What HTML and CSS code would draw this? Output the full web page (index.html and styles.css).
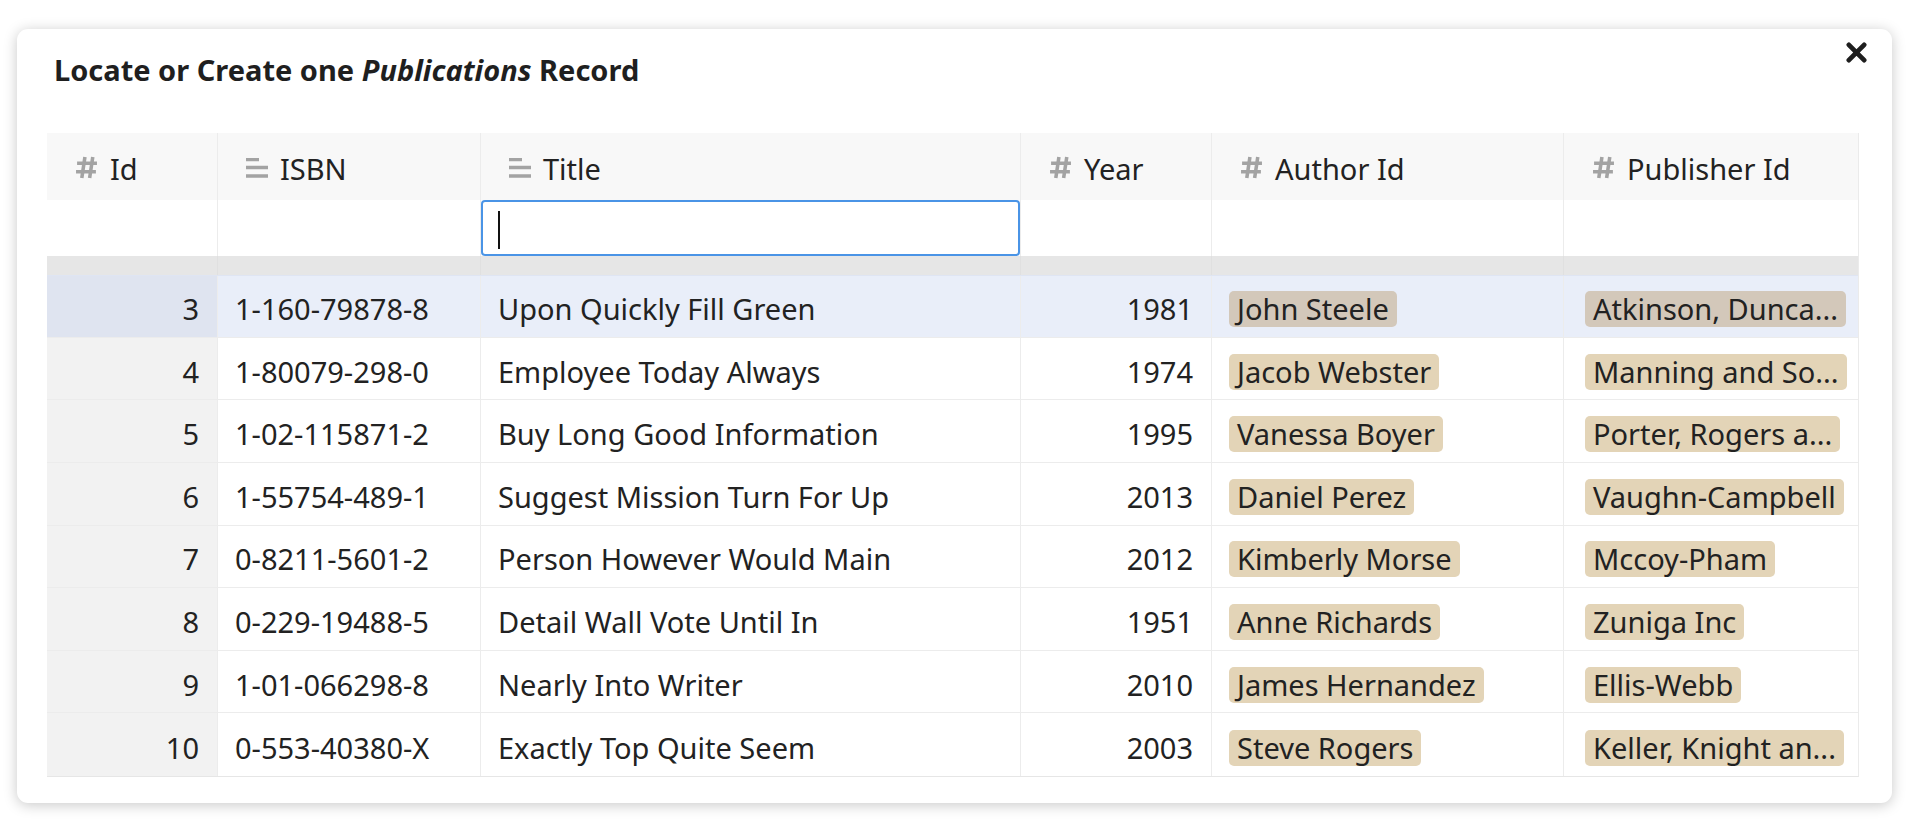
FILE: index.html
```html
<!DOCTYPE html>
<html lang="en">
<head>
<meta charset="utf-8">
<title>Locate or Create one Publications Record</title>
<link rel="stylesheet" href="styles.css">
</head>
<body>
<div class="modal">
  <button class="close" aria-label="Close">
    <svg width="22" height="22" viewBox="0 0 22 22"><path d="M3 3 L19 19 M19 3 L3 19" stroke="#1e1e1e" stroke-width="5" stroke-linecap="round"/></svg>
  </button>
  <h1 class="title">Locate or Create one <em>Publications</em> Record</h1>
  <div class="grid">
    <div class="row head">
      <div class="cell"><svg class="ico hash" viewBox="0 0 22 22"><path d="M9.5 1 L6.5 21 M17 1 L14 21 M2 7 H21 M1 15 H20" stroke="#a3a3a3" stroke-width="3.4"/></svg><span>Id</span></div>
      <div class="cell"><svg class="ico" viewBox="0 0 22 20"><path d="M0 1.5 H13 M0 9.5 H22 M0 18 H22" stroke="#a3a3a3" stroke-width="3.3"/></svg><span>ISBN</span></div>
      <div class="cell"><svg class="ico" viewBox="0 0 22 20"><path d="M0 1.5 H13 M0 9.5 H22 M0 18 H22" stroke="#a3a3a3" stroke-width="3.3"/></svg><span>Title</span></div>
      <div class="cell"><svg class="ico hash" viewBox="0 0 22 22"><path d="M9.5 1 L6.5 21 M17 1 L14 21 M2 7 H21 M1 15 H20" stroke="#a3a3a3" stroke-width="3.4"/></svg><span>Year</span></div>
      <div class="cell"><svg class="ico hash" viewBox="0 0 22 22"><path d="M9.5 1 L6.5 21 M17 1 L14 21 M2 7 H21 M1 15 H20" stroke="#a3a3a3" stroke-width="3.4"/></svg><span>Author Id</span></div>
      <div class="cell"><svg class="ico hash" viewBox="0 0 22 22"><path d="M9.5 1 L6.5 21 M17 1 L14 21 M2 7 H21 M1 15 H20" stroke="#a3a3a3" stroke-width="3.4"/></svg><span>Publisher Id</span></div>
    </div>
    <div class="row filter">
      <div class="cell"></div>
      <div class="cell"></div>
      <div class="cell input-cell"><div class="fake-input"><span class="caret"></span></div></div>
      <div class="cell"></div>
      <div class="cell"></div>
      <div class="cell"></div>
    </div>
    <div class="row band">
      <div class="cell"></div><div class="cell"></div><div class="cell"></div><div class="cell"></div><div class="cell"></div><div class="cell"></div>
    </div>
    <div class="row data selected">
      <div class="cell num id">3</div><div class="cell">1-160-79878-8</div><div class="cell">Upon Quickly Fill Green</div><div class="cell num">1981</div>
      <div class="cell"><span class="tag">John Steele</span></div><div class="cell"><span class="tag">Atkinson, Dunca...</span></div>
    </div>
    <div class="row data">
      <div class="cell num id">4</div><div class="cell">1-80079-298-0</div><div class="cell">Employee Today Always</div><div class="cell num">1974</div>
      <div class="cell"><span class="tag">Jacob Webster</span></div><div class="cell"><span class="tag">Manning and So...</span></div>
    </div>
    <div class="row data">
      <div class="cell num id">5</div><div class="cell">1-02-115871-2</div><div class="cell">Buy Long Good Information</div><div class="cell num">1995</div>
      <div class="cell"><span class="tag">Vanessa Boyer</span></div><div class="cell"><span class="tag">Porter, Rogers a...</span></div>
    </div>
    <div class="row data">
      <div class="cell num id">6</div><div class="cell">1-55754-489-1</div><div class="cell">Suggest Mission Turn For Up</div><div class="cell num">2013</div>
      <div class="cell"><span class="tag">Daniel Perez</span></div><div class="cell"><span class="tag">Vaughn-Campbell</span></div>
    </div>
    <div class="row data">
      <div class="cell num id">7</div><div class="cell">0-8211-5601-2</div><div class="cell">Person However Would Main</div><div class="cell num">2012</div>
      <div class="cell"><span class="tag">Kimberly Morse</span></div><div class="cell"><span class="tag">Mccoy-Pham</span></div>
    </div>
    <div class="row data">
      <div class="cell num id">8</div><div class="cell">0-229-19488-5</div><div class="cell">Detail Wall Vote Until In</div><div class="cell num">1951</div>
      <div class="cell"><span class="tag">Anne Richards</span></div><div class="cell"><span class="tag">Zuniga Inc</span></div>
    </div>
    <div class="row data">
      <div class="cell num id">9</div><div class="cell">1-01-066298-8</div><div class="cell">Nearly Into Writer</div><div class="cell num">2010</div>
      <div class="cell"><span class="tag">James Hernandez</span></div><div class="cell"><span class="tag">Ellis-Webb</span></div>
    </div>
    <div class="row data">
      <div class="cell num id">10</div><div class="cell">0-553-40380-X</div><div class="cell">Exactly Top Quite Seem</div><div class="cell num">2003</div>
      <div class="cell"><span class="tag">Steve Rogers</span></div><div class="cell"><span class="tag">Keller, Knight an...</span></div>
    </div>
  </div>
</div>
</body>
</html>
```
FILE: styles.css
```css
* { box-sizing: border-box; }
html, body { margin: 0; padding: 0; background: #ffffff; }
body {
  font-family: "Noto Sans", "Open Sans", sans-serif;
  color: #222222;
  width: 1919px;
  height: 828px;
  overflow: hidden;
}
.modal {
  position: relative;
  margin: 29px 0 0 17px;
  width: 1875px;
  height: 774px;
  background: #ffffff;
  border-radius: 11px;
  box-shadow: 0 2px 14px rgba(0, 0, 0, 0.22);
  padding: 51px 33px 0 30px;
}
.close {
  position: absolute;
  top: 7px;
  right: 20px;
  width: 32px;
  height: 32px;
  padding: 5px;
  border: 0;
  background: transparent;
  display: flex;
  align-items: center;
  justify-content: center;
}
.close svg { display: block; width: 21px; height: 21px; }
.title {
  margin: -29px 0 0 7px;
  font-size: 29px;
  font-weight: 700;
  line-height: 38px;
  color: #1f1f1f;
}
.title em { font-style: italic; }
.grid {
  margin-top: 44px;
  width: 1812px;
  border-right: 1px solid #ebebeb;
  border-bottom: 1px solid #e6e6e6;
}
.row {
  display: grid;
  grid-template-columns: 171px 263px 540px 191px 352px 295px;
}
.cell {
  border-right: 1px solid #ececec;
  display: flex;
  align-items: center;
  padding: 0 18px 0 17px;
  font-size: 29px;
  white-space: nowrap;
  overflow: hidden;
}
.cell:last-child { border-right: 0; }
.head { height: 66.5px; background: #f8f8f8; }
.head .cell { padding-left: 28px; padding-top: 5px; gap: 12px; }
.head .cell span { color: #222; }
.ico { width: 22px; height: 20px; flex: none; margin-top: -2px; }
.ico.hash { width: 23px; height: 23px; margin-top: -3px; }
.filter { height: 56.7px; background: #ffffff; }
.input-cell { padding: 0; position: relative; }
.fake-input {
  width: 100%;
  height: 100%;
  border: 2px solid #4a94e6;
  border-radius: 4px;
  background: #fff;
  position: relative;
}
.caret {
  position: absolute;
  left: 15px;
  top: 9px;
  width: 2px;
  height: 38px;
  background: #111;
}
.band { height: 19px; background: #e6e6e6; }
.band .cell { border-right-color: #e0e0e0; }
.data { height: 62.6px; border-bottom: 1px solid #ececec; background: #fff; }
.data .cell { padding-top: 5px; }
.data:last-child { border-bottom: 0; }
.data .id { background: #f2f2f2; }
.num { justify-content: flex-end; padding-right: 18px; }
.data.selected { background: #e9eef9; border-top: 1px solid #dfe5f3; }
.data.selected .id { background: #dfe4f0; }
.tag {
  display: inline-block;
  background: #e3d4b7;
  border-radius: 5px;
  padding: 0 8px;
  line-height: 36px;
  margin-top: 1px;
}
.selected .tag { background: #d3c8ba; }
.data .cell:nth-child(6) { padding-left: 21px; }
```
